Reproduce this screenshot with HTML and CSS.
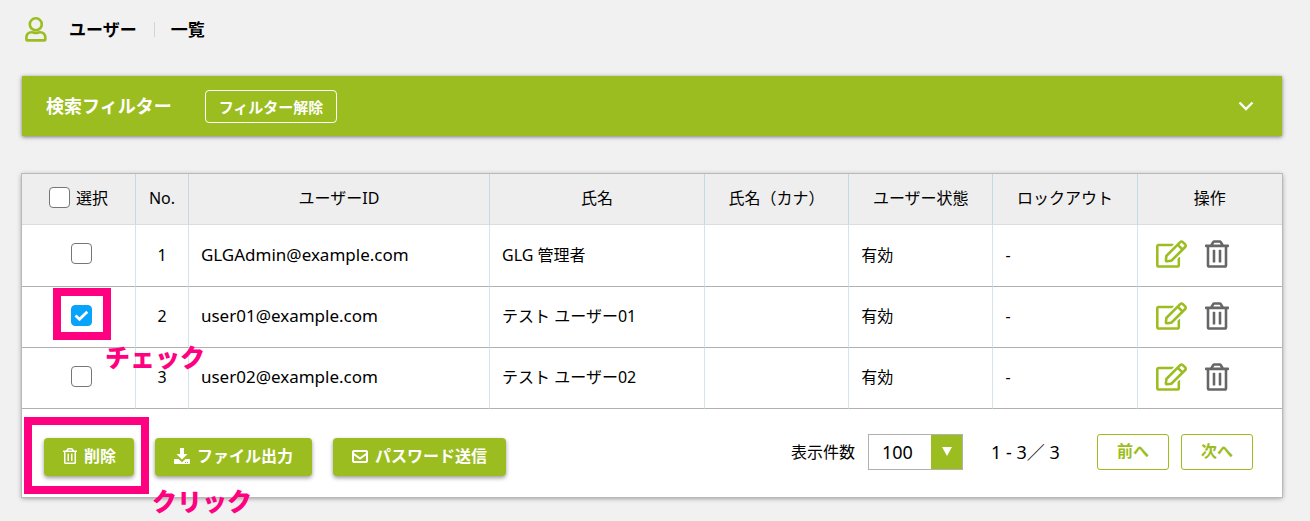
FILE: index.html
```html
<!DOCTYPE html>
<html lang="ja">
<head>
<meta charset="utf-8">
<title>ユーザー 一覧</title>
<link rel="stylesheet" href="styles.css">
</head>
<body>
<svg class="sprite" aria-hidden="true">
  <symbol id="i-edit" viewBox="0 0 576 512"><path d="M402.3 344.9l32-32c5-5 13.7-1.5 13.7 5.700V464c0 26.500-21.500 48-48 48H48c-26.500 0-48-21.500-48-48V112c0-26.500 21.500-48 48-48h273.500c7.100 0 10.700 8.600 5.700 13.700l-32 32c-1.500 1.500-3.500 2.300-5.700 2.300H48v352h352V350.500c0-2.100.8-4.100 2.300-5.600zm156.600-201.800L296.300 405.700l-90.400 10c-26.200 2.900-48.500-19.200-45.600-45.600l10-90.400L432.900 17.100c22.900-22.900 59.900-22.900 82.700 0l43.200 43.200c22.900 22.900 22.900 60 .1 82.800zM460.100 174L402 115.900 216.200 301.800l-7.300 65.300 65.300-7.300L460.100 174zm64.800-79.700l-43.200-43.200c-4.100-4.100-10.800-4.100-14.800 0L436 82l58.100 58.100 30.900-30.900c4-4.200 4-10.800-.1-14.900z"/></symbol>
  <symbol id="i-trash" viewBox="0 0 448 512"><path d="M268 416h24a12 12 0 0 0 12-12V188a12 12 0 0 0-12-12h-24a12 12 0 0 0-12 12v216a12 12 0 0 0 12 12zM432 80h-82.400l-34-56.700A48 48 0 0 0 274.400 0H173.600a48 48 0 0 0-41.200 23.300L98.400 80H16A16 16 0 0 0 0 96v16a16 16 0 0 0 16 16h16v336a48 48 0 0 0 48 48h288a48 48 0 0 0 48-48V128h16a16 16 0 0 0 16-16V96a16 16 0 0 0-16-16zM171.800 50.900A6 6 0 0 1 177 48h94a6 6 0 0 1 5.200 2.900L293.600 80H154.400zM368 464H80V128h288zm-212-48h24a12 12 0 0 0 12-12V188a12 12 0 0 0-12-12h-24a12 12 0 0 0-12 12v216a12 12 0 0 0 12 12z"/></symbol>
</svg>

<header class="page-head">
  <svg class="user-icon" viewBox="0 0 22 25" aria-hidden="true"><circle cx="10.800" cy="7.300" r="6"/><path d="M6.500 15.200C3.500 15.200 1.400 17.500 1.400 20.500v1.700q0 1.200 1.200 1.200h16.500q1.200 0 1.200-1.200v-1.700c0-3-2.100-5.300-5.100-5.300-1.500 0-2.200.8-4.300.8s-2.900-.8-4.400-.8z"/></svg>
  <h1 class="title">ユーザー</h1>
  <span class="subtitle">一覧</span>
</header>

<section class="filter">
  <h2 class="filter-title">検索フィルター</h2>
  <button class="filter-clear" type="button">フィルター解除</button>
  <button class="filter-toggle" type="button" aria-label="開く"><svg viewBox="0 0 16 10" aria-hidden="true"><path d="M1.500 1.500 8 8l6.500-6.500"/></svg></button>
</section>

<main class="card">
  <table class="users">
    <colgroup><col class="c-select"><col class="c-no"><col class="c-id"><col class="c-name"><col class="c-kana"><col class="c-state"><col class="c-lock"><col class="c-ops"></colgroup>
    <thead>
      <tr>
        <th><label class="select-all"><input class="check" type="checkbox">選択</label></th>
        <th>No.</th><th>ユーザーID</th><th>氏名</th><th>氏名（カナ）</th><th>ユーザー状態</th><th>ロックアウト</th><th>操作</th>
      </tr>
    </thead>
    <tbody>
      <tr>
        <td class="center"><span class="pick"><input class="check" type="checkbox" aria-label="1を選択"></span></td>
        <td class="center">1</td><td class="mail">GLGAdmin@example.com</td><td>GLG 管理者</td><td></td><td>有効</td><td>-</td>
        <td><div class="ops"><button class="op edit" type="button" aria-label="編集"><svg><use href="#i-edit"/></svg></button><button class="op trash" type="button" aria-label="削除"><svg><use href="#i-trash"/></svg></button></div></td>
      </tr>
      <tr>
        <td class="center"><span class="pick"><input class="check" type="checkbox" aria-label="2を選択" checked><span class="mark mark-check"></span><span class="note note-check">チェック</span></span></td>
        <td class="center">2</td><td class="mail">user01@example.com</td><td>テスト ユーザー01</td><td></td><td>有効</td><td>-</td>
        <td><div class="ops"><button class="op edit" type="button" aria-label="編集"><svg><use href="#i-edit"/></svg></button><button class="op trash" type="button" aria-label="削除"><svg><use href="#i-trash"/></svg></button></div></td>
      </tr>
      <tr>
        <td class="center"><span class="pick"><input class="check" type="checkbox" aria-label="3を選択"></span></td>
        <td class="center">3</td><td class="mail">user02@example.com</td><td>テスト ユーザー02</td><td></td><td>有効</td><td>-</td>
        <td><div class="ops"><button class="op edit" type="button" aria-label="編集"><svg><use href="#i-edit"/></svg></button><button class="op trash" type="button" aria-label="削除"><svg><use href="#i-trash"/></svg></button></div></td>
      </tr>
    </tbody>
  </table>

  <footer class="card-foot">
    <div class="actions">
      <div class="marked">
        <button class="btn" type="button"><svg class="bi"><use href="#i-trash"/></svg>削除</button>
        <span class="mark mark-delete"></span><span class="note note-delete">クリック</span>
      </div>
      <button class="btn wide" type="button"><svg class="bi" viewBox="0 0 16 16" aria-hidden="true"><path d="M6 0h4v6h3.500L8 11.500 2.500 6H6z"/><path fill-rule="evenodd" d="M.8 11h3.700L8 14.300 11.500 11h3.700q.8 0 .8.8v3.400q0 .8-.8.8H.8q-.8 0-.8-.8v-3.400Q0 11 .8 11zM11 14h1v1h-1zM13 14h1v1h-1z"/></svg>ファイル出力</button>
      <button class="btn wide" type="button"><svg class="bi line" viewBox="0 0 16 16" aria-hidden="true"><rect x="1" y="3" width="14" height="11" rx="1"/><path d="M1 5.500 8 10.500l7-5"/></svg>パスワード送信</button>
    </div>
    <div class="pager">
      <label class="per-label" for="per">表示件数</label>
      <div class="per"><select id="per"><option>100</option></select></div>
      <span class="range">1 - 3／ 3</span>
      <button class="page-btn" type="button">前へ</button>
      <button class="page-btn" type="button">次へ</button>
    </div>
  </footer>
</main>
</body>
</html>
```

FILE: styles.css
```css
* { box-sizing: border-box; }

body {
  margin: 0;
  padding: 14px 28px 24px 22px;
  background: #f1f1f1;
  color: #000;
  font: 16px/24px "Noto Sans", "Noto Sans CJK JP", sans-serif;
}

button { font: inherit; cursor: pointer; }
.sprite { position: absolute; width: 0; height: 0; }

.page-head {
  display: flex;
  align-items: center;
  height: 31px;
  margin-bottom: 31px;
  padding-left: 3px;
}
.user-icon {
  width: 22px;
  height: 25px;
  margin-right: 22px;
  fill: none;
  stroke: #9bbd20;
  stroke-width: 2.6;
}
.title, .subtitle { margin: 0; font-size: 17px; line-height: 24px; font-weight: 700; }
.subtitle { display: flex; align-items: center; }
.subtitle::before { content: ""; width: 1px; height: 15px; margin: 0 16px 0 17px; background: #d4d4d4; }

.filter {
  display: flex;
  align-items: center;
  height: 60px;
  margin-bottom: 38px;
  padding: 0 28px 1px 24px;
  background: #9bbd20;
  color: #fff;
  box-shadow: 0 1px 4px rgba(0, 0, 0, .5);
}
.filter-title { margin: 0 33px 0 0; font-size: 18px; line-height: 24px; font-weight: 700; }
.filter-clear {
  height: 33px;
  margin-top: 2px;
  padding: 0 13px;
  border: 1px solid #fff;
  border-radius: 4px;
  background: none;
  color: #fff;
  font-size: 15px;
  font-weight: 700;
  line-height: 20px;
}
.filter-toggle { display: flex; margin-left: auto; padding: 0; border: 0; background: none; }
.filter-toggle svg { width: 16px; height: 10px; fill: none; stroke: #fff; stroke-width: 2.4; }

.card { background: #fff; box-shadow: 0 0 0 1px #b9b9b9, 0 1px 5px rgba(0, 0, 0, .45); }

.users { width: 100%; border-collapse: separate; border-spacing: 0; table-layout: fixed; }
.c-select { width: 9.05%; }
.c-no { width: 4.2%; }
.c-id { width: 23.9%; }
.c-name { width: 17.05%; }
.c-kana, .c-state, .c-lock, .c-ops { width: 11.45%; }

th, td { padding: 0 12px; border-right: 1px solid #d5e4ec; white-space: nowrap; }
th:last-child, td:last-child { border-right: 0; }
th {
  height: 51px;
  padding-bottom: 3px;
  background: #eee;
  border-right-color: #c3d9e4;
  border-bottom: 1px solid #dcdcdc;
  font-weight: 400;
}
td { height: 61px; padding-bottom: 2px; border-bottom: 1px solid #b0b0b0; text-align: left; }
tbody tr:first-child td { height: 62px; }
.center { text-align: center; }
.mail { font-size: 17px; }

.check {
  display: block;
  appearance: none;
  flex: none;
  width: 21px;
  height: 21px;
  margin: 0;
  border: 1px solid #767676;
  border-radius: 4px;
  background: #fff;
}
.check:checked {
  border-color: #08a4fb;
  background: #08a4fb url("data:image/svg+xml,%3Csvg xmlns='http://www.w3.org/2000/svg' viewBox='0 0 19 19'%3E%3Cpath d='M3.500 9.500 7.500 13.300 15.300 5.800' fill='none' stroke='%23fff' stroke-width='2.800'/%3E%3C/svg%3E") center / 19px no-repeat;
}
.select-all { display: flex; align-items: center; justify-content: center; gap: 6px; }
.pick { position: relative; display: block; width: 27px; margin: 0 auto; padding: 0 0 2px 6px; }

.ops { display: flex; align-items: center; gap: 18px; padding: 0 0 1px 6px; }
.op { display: flex; padding: 0; border: 0; background: none; }
.op svg { height: 28px; }
.edit svg { width: 31px; fill: #9bbd20; }
.trash svg { width: 24px; fill: #666; }

.mark { position: absolute; border: 8px solid #ff0080; pointer-events: none; }
.mark-check { inset: -17px -19px -12px -12px; }
.mark-delete { inset: -21px -15px -18px -20px; }
.note {
  position: absolute;
  z-index: 1;
  color: #ff0080;
  font: 900 25px/28px "Noto Sans CJK JP", sans-serif;
  white-space: nowrap;
  pointer-events: none;
}
.note-check { top: 37px; left: 40px; }
.note-delete { top: 48px; left: 108px; }

.card-foot { display: flex; justify-content: space-between; align-items: flex-start; padding: 25px 29px 21px 22px; }
.actions { display: flex; gap: 21px; padding-top: 4px; }
.marked { position: relative; }
.btn {
  display: flex;
  align-items: center;
  gap: 6px;
  height: 38px;
  padding: 0 18px 3px;
  border: 0;
  border-radius: 4px;
  background: #9bbd20;
  color: #fff;
  font-weight: 700;
  box-shadow: 0 2px 4px rgba(0, 0, 0, .4);
}
.wide { padding-left: 19px; padding-right: 19px; gap: 7px; }
.bi { width: 16px; height: 16px; fill: #fff; }
.line { fill: none; stroke: #fff; stroke-width: 2; }

.pager { display: flex; align-items: center; }
.per-label { margin-right: 13px; }
.per { position: relative; margin-right: 28px; }
.per select {
  display: block;
  appearance: none;
  width: 95px;
  height: 36px;
  padding: 0 32px 0 13px;
  border: 1px solid #b0b0b0;
  border-radius: 0;
  background: linear-gradient(#9bbd20, #9bbd20) right / 31px 100% no-repeat #fff;
  color: #000;
  font: 18px/24px "Noto Sans", sans-serif;
}
.per::after {
  content: "";
  position: absolute;
  top: 13px;
  right: 11px;
  border: 5px solid transparent;
  border-top: 9px solid #fff;
  border-bottom: 0;
  pointer-events: none;
}
.range { min-width: 70px; margin-right: 36px; font-size: 18px; white-space: nowrap; }
.page-btn {
  width: 72px;
  height: 36px;
  padding: 0 0 2px;
  border: 1px solid #9bbd20;
  border-radius: 3px;
  background: #fff;
  color: #9bbd20;
  font-weight: 700;
}
.page-btn + .page-btn { margin-left: 12px; }
```
